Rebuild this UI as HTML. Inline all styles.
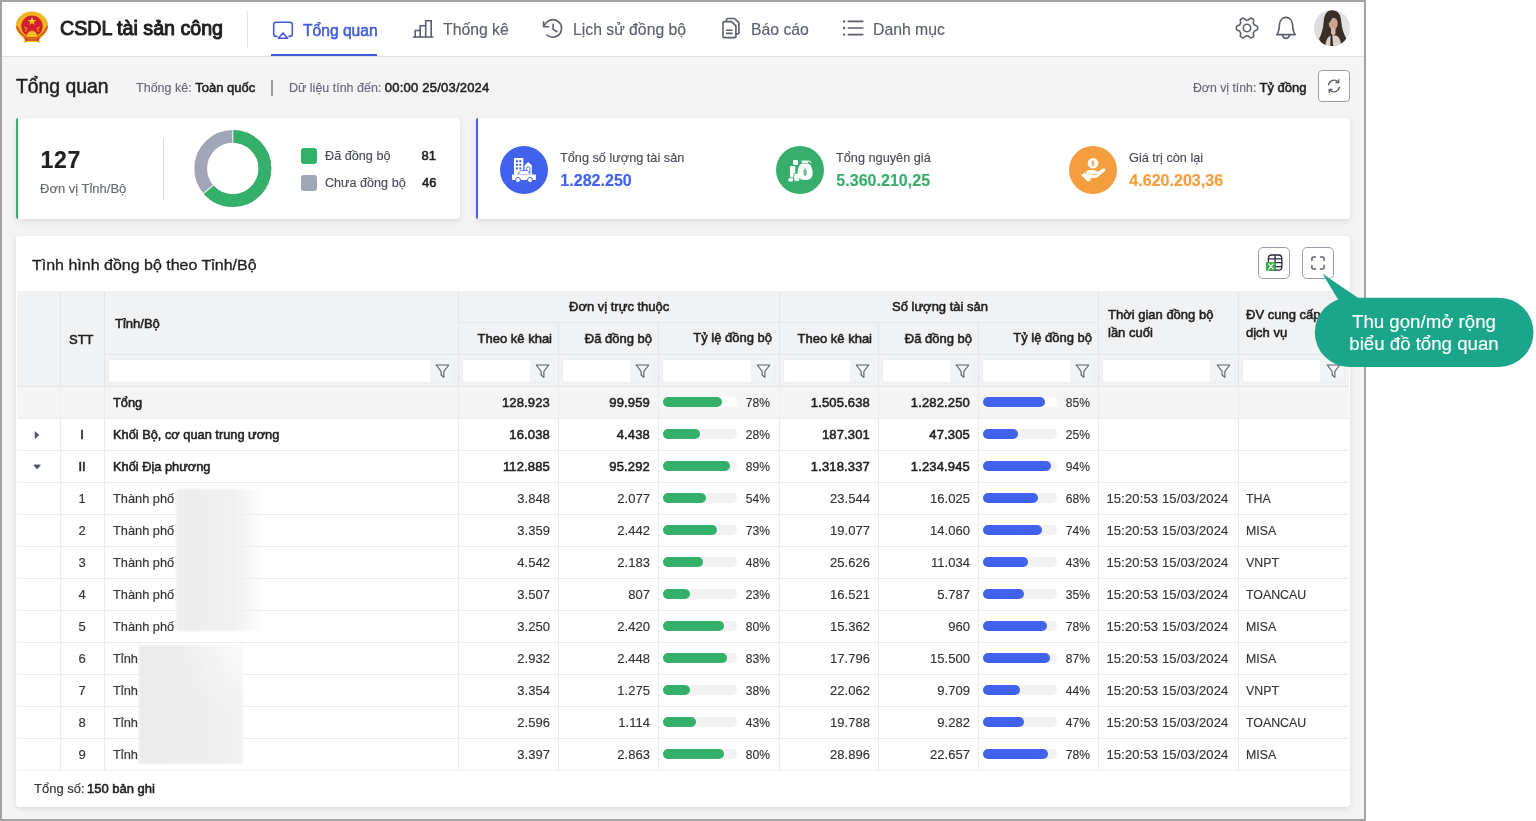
<!DOCTYPE html>
<html lang="vi">
<head>
<meta charset="utf-8">
<title>CSDL tài sản công</title>
<style>
*{box-sizing:border-box;margin:0;padding:0}
html,body{width:1536px;height:821px;background:#fff;overflow:hidden}
body{font-family:"Liberation Sans",sans-serif;color:#1f1f1f;font-size:13px;position:relative}
.abs{position:absolute}
.t{position:absolute;white-space:nowrap;line-height:1;-webkit-text-stroke:.15px currentColor}
#win{position:absolute;left:0;top:0;width:1366px;height:821px;border:2px solid #a3a3a3;background:#f4f4f5;overflow:hidden}
/* everything inside #inner is positioned in page coordinates */
#inner{position:absolute;left:-2px;top:-2px;width:1366px;height:821px;will-change:transform}
#hdr{position:absolute;left:2px;top:2px;width:1362px;height:55px;background:#fff;border-bottom:1px solid #e0e0e3}
.nav{color:#5b5f6e;font-size:16px}
.nav.act{color:#405cdc;-webkit-text-stroke:.55px #405cdc}
.g{color:#666a77}
.b{font-weight:normal;-webkit-text-stroke:.55px currentColor}
.bb{font-weight:normal;-webkit-text-stroke:1px currentColor}
.card{position:absolute;background:#fff;border-radius:4px;box-shadow:0 2px 6px rgba(0,0,0,.10)}
</style>
</head>
<body>
<div id="win"><div id="inner">

<!-- ===== HEADER ===== -->
<div id="hdr"></div>
<div id="logo" class="abs" style="left:16px;top:12px;width:32px;height:32px"></div>
<div class="t bb" id="apptitle" style="transform:scaleX(.982);transform-origin:left;left:60px;top:18px;font-size:20px;color:#1f1f1f">CSDL tài sản công</div>
<div class="abs" style="left:247px;top:11px;width:1px;height:36px;background:#e3e3e6"></div>

<div class="t nav act" id="n1" style="left:303px;top:23px;transform:scaleX(.975);transform-origin:left">Tổng quan</div>
<div class="abs" style="left:271.300px;top:53.800px;width:106.200px;height:2.200px;background:#405cdc"></div>
<div class="t nav" id="n2" style="transform:scaleX(.985);transform-origin:left;left:443px;top:22px">Thống kê</div>
<div class="t nav" id="n3" style="transform:scaleX(.985);transform-origin:left;left:573px;top:22px">Lịch sử đồng bộ</div>
<div class="t nav" id="n4" style="transform:scaleX(.985);transform-origin:left;left:751px;top:22px">Báo cáo</div>
<div class="t nav" id="n5" style="transform:scaleX(.985);transform-origin:left;left:873px;top:22px">Danh mục</div>


<!-- header icons (page coords) -->
<svg class="abs" style="left:0;top:0" width="1366" height="58" viewBox="0 0 1366 58" fill="none" stroke-linecap="round" stroke-linejoin="round">
  <!-- emblem -->
  <g id="emblem" stroke="none">
    <path d="M32 11.900C41 11.900 46.500 17.500 47.600 24.300C48.200 27.500 47 31.200 44 34.600C42.200 36.800 40.200 38.400 38.600 39.400L40.900 43.600L36.500 42.100H27.500L23.100 43.600L25.400 39.400C23.800 38.400 21.800 36.800 20 34.600C17 31.200 15.800 27.500 16.400 24.300C17.500 17.500 23 11.900 32 11.900Z" fill="#f2b51c"/>
    <path d="M32 11.900C41 11.900 46.500 17.500 47.600 24.300C48.200 27.500 47 31.200 44 34.600C42.200 36.800 40.200 38.400 38.600 39.400H25.400C23.800 38.400 21.800 36.800 20 34.600C17 31.200 15.800 27.500 16.400 24.300C17.500 17.500 23 11.900 32 11.900Z" fill="none" stroke="#e9a215" stroke-width=".7"/>
    <circle cx="32" cy="26.200" r="10.700" fill="#d11f2f"/>
    <path d="M16.900 26.800C18.500 31 21.500 34.600 25.600 36.700M47.100 26.800C45.500 31 42.500 34.600 38.400 36.700" stroke="#cc521b" stroke-width="1.700" fill="none" stroke-linecap="round"/>
    <path d="M21.700 30.500C22.800 33.500 24.500 35.800 26.500 37.300H37.500C39.500 35.800 41.200 33.500 42.300 30.500C40.500 34.500 36.500 36.500 32 36.500S23.500 34.500 21.700 30.500Z" fill="#f2b51c"/>
    <path d="M32 16.800l1.150 3.100h3.250l-2.600 2 .95 3.150L32 23.150l-2.750 1.900.95-3.150-2.600-2h3.250Z" fill="#f7c626"/>
    <path d="M24.400 27.300l2.400 1.100-1.300 3M39.600 27.300l-2.400 1.100 1.300 3" stroke="#f0901c" stroke-width="1.200" fill="none" stroke-linecap="round" stroke-linejoin="round"/>
    <path d="M26.300 37.500C26.300 33.600 28.800 30.900 32 30.900S37.700 33.600 37.700 37.500Z" fill="#f5bd22" stroke="#e0791a" stroke-width=".9"/>
    <path d="M24.300 37.300H39.700L38.900 41.100H25.100Z" fill="#d6451c"/>
    <path d="M27 38.600h10M27.600 40h8.800" stroke="#ef8a2a" stroke-width=".6" fill="none"/>
  </g>
  <!-- nav 1: overview (active) -->
  <g stroke="#405cdc" stroke-width="1.600">
    <path d="M277 36.400h-.8a2.500 2.500 0 0 1-2.500-2.500V24.700a2.500 2.500 0 0 1 2.500-2.500h13.600a2.500 2.500 0 0 1 2.500 2.500v9.200a2.500 2.500 0 0 1-2.500 2.500H289"/>
    <path d="M283 32.900l4.600 5.400h-9.200Z"/>
  </g>
  <!-- nav 2: bars -->
  <g stroke="#5b5f6e" stroke-width="1.600" stroke-linejoin="miter">
    <path d="M413.500 37h19.300"/>
    <path d="M415.200 37v-6.500h5V37M420.200 30.500v-4.800h5.500V37M425.700 25.700v-5h5.500V37"/>
  </g>
  <!-- nav 3: history -->
  <g stroke="#5b5f6e" stroke-width="1.600">
    <path d="M544.600 25.300A8.800 8.800 0 1 1 546.900 35"/>
    <path d="M543.600 21.800v5h5"/>
    <path d="M553.100 24.400v5l4 2.300"/>
  </g>
  <!-- nav 4: report -->
  <g stroke="#5b5f6e" stroke-width="1.600">
    <path d="M726.500 21v-1.300a1.200 1.200 0 0 1 1.200-1.200h6.800l4.400 4.200v10a1.200 1.200 0 0 1-1.200 1.200h-1.500"/>
    <path d="M724.200 21.600h7.200l4.500 4.300v10.500a1.200 1.200 0 0 1-1.200 1.200h-10.500a1.200 1.200 0 0 1-1.200-1.200V22.800a1.200 1.200 0 0 1 1.200-1.200Z"/>
    <path d="M726.600 30.200h5.300M726.600 33.400h5.300"/>
  </g>
  <!-- nav 5: list -->
  <g stroke="#5b5f6e" stroke-width="1.600">
    <path d="M848.300 21.400h14.500M848.300 28h14.500M848.300 34.600h14.500"/>
    <path d="M844.100 21.400h.01M844.100 28h.01M844.100 34.600h.01" stroke-width="2.400"/>
  </g>
  <!-- gear -->
  <g stroke="#5b5f6e" stroke-width="1.600">
    <path d="M1257.65 28.00 L1257.64 28.46 L1257.61 28.93 L1257.56 29.39 L1257.22 29.80 L1256.63 30.13 L1255.98 30.41 L1255.34 30.63 L1254.72 30.81 L1254.34 31.04 L1254.21 31.36 L1254.05 31.67 L1253.88 31.98 L1253.70 32.27 L1253.51 32.56 L1253.31 32.84 L1253.30 33.28 L1253.44 33.91 L1253.58 34.58 L1253.66 35.27 L1253.67 35.95 L1253.48 36.45 L1253.11 36.72 L1252.72 36.98 L1252.33 37.22 L1251.92 37.45 L1251.50 37.65 L1251.08 37.84 L1250.55 37.75 L1249.96 37.40 L1249.41 36.98 L1248.89 36.53 L1248.43 36.10 L1248.04 35.88 L1247.69 35.92 L1247.35 35.94 L1247.00 35.95 L1246.65 35.94 L1246.31 35.92 L1245.96 35.88 L1245.57 36.10 L1245.11 36.53 L1244.59 36.98 L1244.04 37.40 L1243.45 37.75 L1242.92 37.84 L1242.50 37.65 L1242.08 37.45 L1241.67 37.22 L1241.28 36.98 L1240.89 36.72 L1240.52 36.45 L1240.33 35.95 L1240.34 35.27 L1240.42 34.58 L1240.56 33.91 L1240.70 33.28 L1240.69 32.84 L1240.49 32.56 L1240.30 32.27 L1240.12 31.98 L1239.95 31.67 L1239.79 31.36 L1239.66 31.04 L1239.28 30.81 L1238.66 30.63 L1238.02 30.41 L1237.37 30.13 L1236.78 29.80 L1236.44 29.39 L1236.39 28.93 L1236.36 28.46 L1236.35 28.00 L1236.36 27.54 L1236.39 27.07 L1236.44 26.61 L1236.78 26.20 L1237.37 25.87 L1238.02 25.59 L1238.66 25.37 L1239.28 25.19 L1239.66 24.96 L1239.79 24.64 L1239.95 24.33 L1240.12 24.02 L1240.30 23.73 L1240.49 23.44 L1240.69 23.16 L1240.70 22.72 L1240.56 22.09 L1240.42 21.42 L1240.34 20.73 L1240.33 20.05 L1240.52 19.55 L1240.89 19.28 L1241.28 19.02 L1241.67 18.78 L1242.08 18.55 L1242.50 18.35 L1242.92 18.16 L1243.45 18.25 L1244.04 18.60 L1244.59 19.02 L1245.11 19.47 L1245.57 19.90 L1245.96 20.12 L1246.31 20.08 L1246.65 20.06 L1247.00 20.05 L1247.35 20.06 L1247.69 20.08 L1248.04 20.12 L1248.43 19.90 L1248.89 19.47 L1249.41 19.02 L1249.96 18.60 L1250.55 18.25 L1251.08 18.16 L1251.50 18.35 L1251.92 18.55 L1252.33 18.78 L1252.72 19.02 L1253.11 19.28 L1253.48 19.55 L1253.67 20.05 L1253.66 20.73 L1253.58 21.42 L1253.44 22.09 L1253.30 22.72 L1253.31 23.16 L1253.51 23.44 L1253.70 23.73 L1253.88 24.03 L1254.05 24.33 L1254.21 24.64 L1254.34 24.96 L1254.72 25.19 L1255.34 25.37 L1255.98 25.59 L1256.63 25.87 L1257.22 26.20 L1257.56 26.61 L1257.61 27.07 L1257.64 27.54Z"/>
    <circle cx="1247" cy="28" r="3.700"/>
  </g>
  <!-- bell -->
  <g stroke="#5b5f6e" stroke-width="1.600">
    <path d="M1276.800 34.600c1.400-1.600 2-3.600 2.300-6.200l.4-4.200c.4-4 3-6.800 6.500-6.800s6.100 2.800 6.500 6.800l.4 4.200c.3 2.600.9 4.600 2.300 6.200Z"/>
    <path d="M1282.600 35c.4 2.100 1.700 3.400 3.400 3.400s3-1.300 3.400-3.400"/>
  </g>
  <!-- avatar -->
  <defs><clipPath id="avc"><circle cx="1332" cy="28" r="18"/></clipPath><filter id="avb" x="-10%" y="-10%" width="120%" height="120%"><feGaussianBlur stdDeviation=".45"/></filter></defs>
  <g clip-path="url(#avc)" stroke="none">
    <rect x="1314" y="10" width="36" height="36" fill="#e2e3e6"/>
    <rect x="1314" y="10" width="10" height="36" fill="#dcdde1"/>
    <g filter="url(#avb)">
    <path d="M1332 10.200C1326.500 10.200 1324.300 15 1323.800 21C1323.200 29 1321.200 35 1319 39L1321.500 43.500L1327 46.500H1338L1343.500 43L1346.200 38.500C1343.200 33 1341.700 27 1341.200 21C1340.700 14.500 1338 10.200 1332 10.200Z" fill="#3a2d27"/>
    <path d="M1325.500 46.500C1325.500 40 1328 36.500 1331 35.500L1336 35.500C1339 36.500 1341 40 1341 46.500Z" fill="#d9cfc9"/>
    <ellipse cx="1333.200" cy="23.600" rx="4.500" ry="6" fill="#cda391"/>
    <path d="M1331 28h4.500v5.500l-2 2.500-2.500-2.500Z" fill="#d6b5a4"/>
    <path d="M1328.400 23.500C1328 18 1330.300 15.300 1333.600 15.300C1336.600 15.300 1338.100 17.300 1338.300 20C1336.400 18.300 1334.200 17.500 1332.300 17.700C1331.500 19.600 1330.200 21.800 1328.400 23.500Z" fill="#3a2d27"/>
    <path d="M1330.600 34.500l1.700 1 .8 11h-2.800Z" fill="#2b2522"/>
    </g>
  </g>
</svg>

<!-- ===== SUB HEADER ===== -->
<div class="t" id="pgtitle" style="-webkit-text-stroke:.45px currentColor;transform:scaleX(.968);transform-origin:left;left:16px;top:76px;font-size:20px;color:#1f1f1f">Tổng quan</div>
<div class="t g" id="s1" style="transform:scaleX(.965);transform-origin:left;left:135.500px;top:81px;font-size:13px">Thống kê:</div>
<div class="t b" id="s2" style="left:195.300px;top:81px;font-size:13px">Toàn quốc</div>
<div class="abs" style="left:271.300px;top:80px;width:1.400px;height:16px;background:#999ba3"></div>
<div class="t g" id="s3" style="transform:scaleX(.96);transform-origin:left;left:288.500px;top:81px;font-size:13px">Dữ liệu tính đến:</div>
<div class="t b" id="s4" style="letter-spacing:.22px;left:384.800px;top:81px;font-size:13px">00:00 25/03/2024</div>
<div class="t g" id="s5" style="transform:scaleX(.945);transform-origin:left;left:1192.500px;top:81px;font-size:13px">Đơn vị tính:</div>
<div class="t b" id="s6" style="left:1259.500px;top:81px;font-size:13px">Tỷ đồng</div>
<div class="abs" id="btnref" style="left:1318px;top:70px;width:32px;height:32px;border:1px solid #9a9eab;border-radius:4px;background:#fff"></div>


<!-- ===== CARDS ===== -->
<div class="card" id="card1" style="left:16px;top:118px;width:444px;height:100.500px;border-left:2px solid #35b06b;border-radius:2px 4px 4px 2px"></div>
<div class="card" id="card2" style="left:476px;top:118px;width:874px;height:100.500px;border-left:2px solid #4262ee;border-radius:2px 4px 4px 2px"></div>
<div class="t " id="c127" style="top:149.3px;font-size:23px;color:#1f1f1f;left:40.5px;letter-spacing:0.7px;font-weight:bold;">127</div>
<div class="t " id="cdv" style="top:182px;font-size:13px;color:#666a77;left:40px;">Đơn vị Tỉnh/Bộ</div>
<div class="abs" style="left:163px;top:138px;width:1px;height:62px;background:#d9dade"></div>
<svg class="abs" style="left:186px;top:122px" width="94" height="94" viewBox="186 122 94 94"><circle cx="232.8" cy="168.5" r="32.1" fill="none" stroke="#a0a6b8" stroke-width="12.8"/><circle cx="232.8" cy="168.5" r="32.1" fill="none" stroke="#35b06b" stroke-width="12.8" stroke-dasharray="128.64 201.69" transform="rotate(-90 232.8 168.5)"/><g stroke="#fff" stroke-width="1"><line x1="232.8" y1="129.5" x2="232.8" y2="143.3"/><line x1="232.8" y1="129.5" x2="232.8" y2="143.3" transform="rotate(229.61 232.8 168.5)"/></g></svg>
<div class="abs" style="left:301px;top:148px;width:16px;height:16px;border-radius:3px;background:#35b06b"></div>
<div class="abs" style="left:301px;top:175px;width:16px;height:16px;border-radius:3px;background:#a0a6b8"></div>
<div class="t " id="lg1" style="top:149px;font-size:13px;color:#4a4d5a;left:325px;transform:scaleX(0.975);transform-origin:left center;">Đã đồng bộ</div>
<div class="t " id="lg2" style="top:176px;font-size:13px;color:#4a4d5a;left:325px;transform:scaleX(0.97);transform-origin:left center;">Chưa đồng bộ</div>
<div class="t " id="lg1v" style="top:149px;font-size:13px;color:#1f1f1f;right:930px;-webkit-text-stroke:.55px currentColor;">81</div>
<div class="t " id="lg2v" style="top:176px;font-size:13px;color:#1f1f1f;right:929.5px;-webkit-text-stroke:.55px currentColor;">46</div>
<div class="abs" style="left:500px;top:146px;width:48px;height:48px;border-radius:50%;background:#4262ee"></div>
<div class="t " id="st1l" style="top:151px;font-size:13px;color:#4a4d5a;left:560px;transform:scaleX(0.978);transform-origin:left center;">Tổng số lượng tài sản</div>
<div class="t " id="st1v" style="top:172.7px;font-size:16px;color:#4262ee;left:560.3px;letter-spacing:0.03px;font-weight:bold;">1.282.250</div>
<div class="abs" style="left:776px;top:146px;width:48px;height:48px;border-radius:50%;background:#37ae6c"></div>
<div class="t " id="st2l" style="top:151px;font-size:13px;color:#4a4d5a;left:836px;transform:scaleX(0.978);transform-origin:left center;">Tổng nguyên giá</div>
<div class="t " id="st2v" style="top:172.7px;font-size:16px;color:#37ae6c;left:836.3px;letter-spacing:0.03px;font-weight:bold;">5.360.210,25</div>
<div class="abs" style="left:1069px;top:146px;width:48px;height:48px;border-radius:50%;background:#f59e3f"></div>
<div class="t " id="st3l" style="top:151px;font-size:13px;color:#4a4d5a;left:1129px;transform:scaleX(0.978);transform-origin:left center;">Giá trị còn lại</div>
<div class="t " id="st3v" style="top:172.7px;font-size:16px;color:#f59e3f;left:1129.3px;letter-spacing:0.03px;font-weight:bold;">4.620.203,36</div>
<svg class="abs" style="left:476px;top:140px" width="874" height="60" viewBox="476 140 874 60" fill="none"><g><rect x="514" y="158" width="9.300" height="17" fill="#fff"/><g fill="#4262f0"><rect x="516" y="160.200" width="2" height="2"/><rect x="519.300" y="160.200" width="2" height="2"/><rect x="516" y="163.800" width="2" height="2"/><rect x="519.300" y="163.800" width="2" height="2"/><rect x="516" y="167.400" width="2" height="2"/><rect x="519.300" y="167.400" width="2" height="2"/></g><path d="M524.600 175v-9.800l3.600-3.200 3.600 3.200V175Z" fill="#fff"/><path d="M526.500 173v-4.500a1.700 1.700 0 0 1 3.400 0V173" stroke="#4262f0" stroke-width=".9"/><path d="M517.500 174.800l2.300-3.300c.4-.6 1-.9 1.700-.9h5.300c.8 0 1.500.4 1.900 1.100l1.700 3.100Z" fill="#fff" stroke="#4262f0" stroke-width=".9"/><rect x="512" y="174.600" width="24" height="5.400" rx=".8" fill="#fff"/><circle cx="518" cy="180" r="2.500" fill="#fff" stroke="#4262f0" stroke-width="1"/><circle cx="530" cy="180" r="2.500" fill="#fff" stroke="#4262f0" stroke-width="1"/></g><g fill="#fff"><rect x="793" y="160" width="5" height="5" rx="1"/><rect x="790" y="166" width="5.300" height="11.500" rx="1"/><rect x="788.400" y="178.200" width="4.600" height="3.300" rx=".8"/><rect x="793.800" y="173.400" width="5.800" height="7.800" rx="1" stroke="#37ae6c" stroke-width=".8"/><path d="M801.500 163.500c-2.600 2-4 5.600-4 9.400 0 4.600 2.400 7 7.600 7s7.600-2.400 7.600-7c0-3.800-1.400-7.400-4-9.400Z"/><path d="M801 160.300l1.400 2.600h5.400l1.400-2.600-1.700.8-1-1.100-1.400 1.100-1.400-1.100-1 1.100Z"/><path d="M808.500 161.500c1.600-.6 2.800.4 2.400 1.800" stroke="#fff" stroke-width="1" fill="none"/></g><path d="M806.60 171.00C806.40 169.80 803.50 169.60 803.50 171.10C803.50 172.50 806.80 171.90 806.80 173.40C806.80 174.80 803.60 174.80 803.40 173.50M805.10 168.80V175.60" stroke="#37ae6c" stroke-width="1.0" fill="none" stroke-linecap="round"/><g fill="#fff"><circle cx="1093" cy="163.200" r="5.300"/><path d="M1081.200 175.200l3.600-2.600 6.400 6.800-3.200 2.300Z"/><path d="M1085.900 171.600c1.600-1.200 3.400-1.700 5.200-1.500l4.600.5c1 .1 1.700.7 1.800 1.500l5.200-3.500c.8-.5 1.800-.3 2.300.4.500.7.300 1.600-.4 2.200l-6.300 5.400c-1 .9-2.300 1.300-3.600 1.300h-3.400c-.8 0-1.500.3-2.100.8l-.6.500Z"/></g><path d="M1092.500 174.600h4.200" stroke="#f59e3f" stroke-width=".9" stroke-linecap="round"/><path d="M1094.28 162.28C1094.11 161.26 1091.64 161.09 1091.64 162.37C1091.64 163.56 1094.44 163.05 1094.44 164.32C1094.44 165.51 1091.72 165.51 1091.56 164.41M1093.00 160.41V166.19" stroke="#f59e3f" stroke-width="0.9" fill="none" stroke-linecap="round"/></svg>
<!-- ===== TABLE PANEL ===== -->
<div class="card" id="panel" style="left:16px;top:236px;width:1334px;height:571px"></div>
<div class="t " id="ptitle" style="top:256.6px;font-size:15px;color:#1f1f1f;left:32px;transform:scaleX(1.066);transform-origin:left center;-webkit-text-stroke:.3px currentColor;">Tình hình đồng bộ theo Tỉnh/Bộ</div>
<div class="abs" style="left:1258px;top:247px;width:32px;height:32px;border:1px solid #9a9eab;border-radius:5px;background:#fff"></div>
<div class="abs" style="left:1302px;top:247px;width:32px;height:32px;border:1px solid #9a9eab;border-radius:5px;background:#fff"></div>
<svg class="abs" style="left:1250px;top:60px" width="100" height="230" viewBox="1250 60 100 230" fill="none" stroke-linecap="round" stroke-linejoin="round"><g stroke="#5b5f6e" stroke-width="1.300"><path d="M1328.600 84.800a5.600 5.600 0 0 1 9.800-2.600"/><path d="M1338.800 79.600v2.900h-2.900"/><path d="M1339.400 87.200a5.600 5.600 0 0 1-9.800 2.600"/><path d="M1329.200 92.400v-2.900h2.900"/></g><g stroke="#2b2e3a" stroke-width="1.300"><rect x="1268.400" y="255" width="13.400" height="15.200" rx="3.200"/><path d="M1268.400 258.800h13.400M1275 262.700h6.800M1275 266.600h6.800M1275.100 255v15.200"/></g><rect x="1266" y="262" width="9.700" height="8.700" fill="#3fae4a"/><path d="M1268.800 263.900l4.200 5M1273 263.900l-4.200 5" stroke="#fff" stroke-width="1.300"/><g stroke="#5b5f6e" stroke-width="1.500"><path d="M1311.900 260.600v-2a1.600 1.600 0 0 1 1.600-1.600h2"/><path d="M1320.500 257h2a1.600 1.600 0 0 1 1.600 1.600v2"/><path d="M1324.100 265.400v2a1.600 1.600 0 0 1-1.600 1.600h-2"/><path d="M1315.500 269h-2a1.600 1.600 0 0 1-1.600-1.600v-2"/></g></svg>
<div class="abs" style="left:17px;top:291px;width:1332px;height:95px;background:#f1f2f4"></div>
<div class="abs" style="left:17px;top:386px;width:1332px;height:32px;background:#f5f5f5"></div>
<div class="abs" style="left:458px;top:322px;width:640px;height:1px;background:#e4e5e8"></div>
<div class="abs" style="left:104px;top:354px;width:1245px;height:1px;background:#e4e5e8"></div>
<div class="abs" style="left:17px;top:386px;width:1332px;height:1px;background:#e4e5e8"></div>
<div class="abs" style="left:17px;top:418px;width:1332px;height:1px;background:#ececee"></div>
<div class="abs" style="left:17px;top:450px;width:1332px;height:1px;background:#ececee"></div>
<div class="abs" style="left:17px;top:482px;width:1332px;height:1px;background:#ececee"></div>
<div class="abs" style="left:17px;top:514px;width:1332px;height:1px;background:#ececee"></div>
<div class="abs" style="left:17px;top:546px;width:1332px;height:1px;background:#ececee"></div>
<div class="abs" style="left:17px;top:578px;width:1332px;height:1px;background:#ececee"></div>
<div class="abs" style="left:17px;top:610px;width:1332px;height:1px;background:#ececee"></div>
<div class="abs" style="left:17px;top:642px;width:1332px;height:1px;background:#ececee"></div>
<div class="abs" style="left:17px;top:674px;width:1332px;height:1px;background:#ececee"></div>
<div class="abs" style="left:17px;top:706px;width:1332px;height:1px;background:#ececee"></div>
<div class="abs" style="left:17px;top:738px;width:1332px;height:1px;background:#ececee"></div>
<div class="abs" style="left:17px;top:770px;width:1332px;height:1px;background:#f0f0f1"></div>
<div class="abs" style="left:60px;top:291px;width:1px;height:95px;background:#e4e5e8"></div>
<div class="abs" style="left:60px;top:386px;width:1px;height:384px;background:#ececee"></div>
<div class="abs" style="left:104px;top:291px;width:1px;height:95px;background:#e4e5e8"></div>
<div class="abs" style="left:104px;top:386px;width:1px;height:384px;background:#ececee"></div>
<div class="abs" style="left:458px;top:291px;width:1px;height:95px;background:#e4e5e8"></div>
<div class="abs" style="left:458px;top:386px;width:1px;height:384px;background:#ececee"></div>
<div class="abs" style="left:558px;top:322px;width:1px;height:64px;background:#e4e5e8"></div>
<div class="abs" style="left:558px;top:386px;width:1px;height:384px;background:#ececee"></div>
<div class="abs" style="left:658px;top:322px;width:1px;height:64px;background:#e4e5e8"></div>
<div class="abs" style="left:658px;top:386px;width:1px;height:384px;background:#ececee"></div>
<div class="abs" style="left:779px;top:291px;width:1px;height:95px;background:#e4e5e8"></div>
<div class="abs" style="left:779px;top:386px;width:1px;height:384px;background:#ececee"></div>
<div class="abs" style="left:878px;top:322px;width:1px;height:64px;background:#e4e5e8"></div>
<div class="abs" style="left:878px;top:386px;width:1px;height:384px;background:#ececee"></div>
<div class="abs" style="left:978px;top:322px;width:1px;height:64px;background:#e4e5e8"></div>
<div class="abs" style="left:978px;top:386px;width:1px;height:384px;background:#ececee"></div>
<div class="abs" style="left:1098px;top:291px;width:1px;height:95px;background:#e4e5e8"></div>
<div class="abs" style="left:1098px;top:386px;width:1px;height:384px;background:#ececee"></div>
<div class="abs" style="left:1238px;top:291px;width:1px;height:95px;background:#e4e5e8"></div>
<div class="abs" style="left:1238px;top:386px;width:1px;height:384px;background:#ececee"></div>
<div class="t " id="hstt" style="top:333px;font-size:13px;color:#1f1f1f;left:69px;-webkit-text-stroke:.55px currentColor;">STT</div>
<div class="t " id="htinh" style="top:317px;font-size:13px;color:#1f1f1f;left:115px;-webkit-text-stroke:.55px currentColor;">Tỉnh/Bộ</div>
<div class="t " id="hg1" style="top:300px;font-size:13px;color:#1f1f1f;left:569px;-webkit-text-stroke:.55px currentColor;">Đơn vị trực thuộc</div>
<div class="t " id="hg2" style="top:300px;font-size:13px;color:#1f1f1f;left:892px;-webkit-text-stroke:.55px currentColor;">Số lượng tài sản</div>
<div class="t " id="h1" style="top:332px;font-size:13px;color:#1f1f1f;right:814px;-webkit-text-stroke:.55px currentColor;">Theo kê khai</div>
<div class="t " id="h2" style="top:332px;font-size:13px;color:#1f1f1f;right:714px;-webkit-text-stroke:.55px currentColor;">Đã đồng bộ</div>
<div class="t " id="h3" style="top:331px;font-size:13px;color:#1f1f1f;right:594px;-webkit-text-stroke:.55px currentColor;">Tỷ lệ đồng bộ</div>
<div class="t " id="h4" style="top:332px;font-size:13px;color:#1f1f1f;right:494px;-webkit-text-stroke:.55px currentColor;">Theo kê khai</div>
<div class="t " id="h5" style="top:332px;font-size:13px;color:#1f1f1f;right:394px;-webkit-text-stroke:.55px currentColor;">Đã đồng bộ</div>
<div class="t " id="h6" style="top:331px;font-size:13px;color:#1f1f1f;right:274px;-webkit-text-stroke:.55px currentColor;">Tỷ lệ đồng bộ</div>
<div class="t " id="h7a" style="top:308px;font-size:13px;color:#1f1f1f;left:1108px;-webkit-text-stroke:.55px currentColor;">Thời gian đồng bộ</div>
<div class="t " id="h7b" style="top:326px;font-size:13px;color:#1f1f1f;left:1108px;-webkit-text-stroke:.55px currentColor;">lần cuối</div>
<div class="t " id="h8a" style="top:308px;font-size:13px;color:#1f1f1f;left:1246px;-webkit-text-stroke:.55px currentColor;">ĐV cung cấp</div>
<div class="t " id="h8b" style="top:326px;font-size:13px;color:#1f1f1f;left:1246px;-webkit-text-stroke:.55px currentColor;">dịch vụ</div>
<div class="abs" style="left:108.7px;top:359.700px;width:344.5px;height:22.500px;background:#fff;border-radius:2px;box-shadow:0 0 0 .5px #e9eaec"><div style="position:absolute;right:0;top:0;width:23.500px;height:22.500px;background:#f3f4f6;border-radius:0 2px 2px 0"></div><svg width="15" height="14.500" viewBox="0 0 15 14.500" style="position:absolute;right:3px;top:4.200px" fill="none" stroke="#5a5e6a" stroke-width="1.100" stroke-linejoin="round"><path d="M1.200 1h12.600l-4.900 6.300v6l-2.800-2.300V7.300Z"/></svg></div>
<div class="abs" style="left:462.5px;top:359.700px;width:90.70000000000005px;height:22.500px;background:#fff;border-radius:2px;box-shadow:0 0 0 .5px #e9eaec"><div style="position:absolute;right:0;top:0;width:23.500px;height:22.500px;background:#f3f4f6;border-radius:0 2px 2px 0"></div><svg width="15" height="14.500" viewBox="0 0 15 14.500" style="position:absolute;right:3px;top:4.200px" fill="none" stroke="#5a5e6a" stroke-width="1.100" stroke-linejoin="round"><path d="M1.200 1h12.600l-4.900 6.300v6l-2.800-2.300V7.300Z"/></svg></div>
<div class="abs" style="left:562.5px;top:359.700px;width:90.70000000000005px;height:22.500px;background:#fff;border-radius:2px;box-shadow:0 0 0 .5px #e9eaec"><div style="position:absolute;right:0;top:0;width:23.500px;height:22.500px;background:#f3f4f6;border-radius:0 2px 2px 0"></div><svg width="15" height="14.500" viewBox="0 0 15 14.500" style="position:absolute;right:3px;top:4.200px" fill="none" stroke="#5a5e6a" stroke-width="1.100" stroke-linejoin="round"><path d="M1.200 1h12.600l-4.900 6.300v6l-2.800-2.300V7.300Z"/></svg></div>
<div class="abs" style="left:662.5px;top:359.700px;width:111.70000000000005px;height:22.500px;background:#fff;border-radius:2px;box-shadow:0 0 0 .5px #e9eaec"><div style="position:absolute;right:0;top:0;width:23.500px;height:22.500px;background:#f3f4f6;border-radius:0 2px 2px 0"></div><svg width="15" height="14.500" viewBox="0 0 15 14.500" style="position:absolute;right:3px;top:4.200px" fill="none" stroke="#5a5e6a" stroke-width="1.100" stroke-linejoin="round"><path d="M1.200 1h12.600l-4.900 6.300v6l-2.800-2.300V7.300Z"/></svg></div>
<div class="abs" style="left:783.5px;top:359.700px;width:89.70000000000005px;height:22.500px;background:#fff;border-radius:2px;box-shadow:0 0 0 .5px #e9eaec"><div style="position:absolute;right:0;top:0;width:23.500px;height:22.500px;background:#f3f4f6;border-radius:0 2px 2px 0"></div><svg width="15" height="14.500" viewBox="0 0 15 14.500" style="position:absolute;right:3px;top:4.200px" fill="none" stroke="#5a5e6a" stroke-width="1.100" stroke-linejoin="round"><path d="M1.200 1h12.600l-4.900 6.300v6l-2.800-2.300V7.300Z"/></svg></div>
<div class="abs" style="left:882.5px;top:359.700px;width:90.70000000000005px;height:22.500px;background:#fff;border-radius:2px;box-shadow:0 0 0 .5px #e9eaec"><div style="position:absolute;right:0;top:0;width:23.500px;height:22.500px;background:#f3f4f6;border-radius:0 2px 2px 0"></div><svg width="15" height="14.500" viewBox="0 0 15 14.500" style="position:absolute;right:3px;top:4.200px" fill="none" stroke="#5a5e6a" stroke-width="1.100" stroke-linejoin="round"><path d="M1.200 1h12.600l-4.900 6.300v6l-2.800-2.300V7.300Z"/></svg></div>
<div class="abs" style="left:982.5px;top:359.700px;width:110.70000000000005px;height:22.500px;background:#fff;border-radius:2px;box-shadow:0 0 0 .5px #e9eaec"><div style="position:absolute;right:0;top:0;width:23.500px;height:22.500px;background:#f3f4f6;border-radius:0 2px 2px 0"></div><svg width="15" height="14.500" viewBox="0 0 15 14.500" style="position:absolute;right:3px;top:4.200px" fill="none" stroke="#5a5e6a" stroke-width="1.100" stroke-linejoin="round"><path d="M1.200 1h12.600l-4.900 6.300v6l-2.800-2.300V7.300Z"/></svg></div>
<div class="abs" style="left:1102.5px;top:359.700px;width:131.29999999999995px;height:22.500px;background:#fff;border-radius:2px;box-shadow:0 0 0 .5px #e9eaec"><div style="position:absolute;right:0;top:0;width:23.500px;height:22.500px;background:#f3f4f6;border-radius:0 2px 2px 0"></div><svg width="15" height="14.500" viewBox="0 0 15 14.500" style="position:absolute;right:3px;top:4.200px" fill="none" stroke="#5a5e6a" stroke-width="1.100" stroke-linejoin="round"><path d="M1.200 1h12.600l-4.900 6.300v6l-2.800-2.300V7.300Z"/></svg></div>
<div class="abs" style="left:1242.5px;top:359.700px;width:101.0px;height:22.500px;background:#fff;border-radius:2px;box-shadow:0 0 0 .5px #e9eaec"><div style="position:absolute;right:0;top:0;width:23.500px;height:22.500px;background:#f3f4f6;border-radius:0 2px 2px 0"></div><svg width="15" height="14.500" viewBox="0 0 15 14.500" style="position:absolute;right:3px;top:4.200px" fill="none" stroke="#5a5e6a" stroke-width="1.100" stroke-linejoin="round"><path d="M1.200 1h12.600l-4.900 6.300v6l-2.800-2.300V7.300Z"/></svg></div>
<div class="t rb" style="top:396px;font-size:13px;color:#1f1f1f;left:112.5px;-webkit-text-stroke:.55px currentColor;transform:scaleX(0.985);transform-origin:left center;">Tổng</div>
<div class="t rb" style="top:396px;font-size:13px;color:#1f1f1f;right:816px;-webkit-text-stroke:.55px currentColor;letter-spacing:0.15px;">128.923</div>
<div class="t rb" style="top:396px;font-size:13px;color:#1f1f1f;right:716px;-webkit-text-stroke:.55px currentColor;letter-spacing:0.15px;">99.959</div>
<div class="abs" style="left:663px;top:397px;width:74px;height:10px;border-radius:5px;background:#fff"></div>
<div class="abs" style="left:663px;top:397px;width:59px;height:10px;border-radius:5px;background:#35b06b"></div>
<div class="t rn" style="top:396px;font-size:13px;color:#333;right:596px;transform:scaleX(0.93);transform-origin:right center;">78%</div>
<div class="t rb" style="top:396px;font-size:13px;color:#1f1f1f;right:496px;-webkit-text-stroke:.55px currentColor;letter-spacing:0.15px;">1.505.638</div>
<div class="t rb" style="top:396px;font-size:13px;color:#1f1f1f;right:396px;-webkit-text-stroke:.55px currentColor;letter-spacing:0.15px;">1.282.250</div>
<div class="abs" style="left:983px;top:397px;width:74px;height:10px;border-radius:5px;background:#fff"></div>
<div class="abs" style="left:983px;top:397px;width:62px;height:10px;border-radius:5px;background:#4262ee"></div>
<div class="t rn" style="top:396px;font-size:13px;color:#333;right:276px;transform:scaleX(0.93);transform-origin:right center;">85%</div>
<div class="t rb" style="left:60px;width:44px;text-align:center;top:428px;font-size:13px;color:#1f1f1f;-webkit-text-stroke:.55px currentColor;">I</div>
<div class="t rb" style="top:428px;font-size:13px;color:#1f1f1f;left:112.5px;-webkit-text-stroke:.55px currentColor;transform:scaleX(0.985);transform-origin:left center;">Khối Bộ, cơ quan trung ương</div>
<div class="t rb" style="top:428px;font-size:13px;color:#1f1f1f;right:816px;-webkit-text-stroke:.55px currentColor;letter-spacing:0.15px;">16.038</div>
<div class="t rb" style="top:428px;font-size:13px;color:#1f1f1f;right:716px;-webkit-text-stroke:.55px currentColor;letter-spacing:0.15px;">4.438</div>
<div class="abs" style="left:663px;top:429px;width:74px;height:10px;border-radius:5px;background:#f2f2f3"></div>
<div class="abs" style="left:663px;top:429px;width:37px;height:10px;border-radius:5px;background:#35b06b"></div>
<div class="t rn" style="top:428px;font-size:13px;color:#333;right:596px;transform:scaleX(0.93);transform-origin:right center;">28%</div>
<div class="t rb" style="top:428px;font-size:13px;color:#1f1f1f;right:496px;-webkit-text-stroke:.55px currentColor;letter-spacing:0.15px;">187.301</div>
<div class="t rb" style="top:428px;font-size:13px;color:#1f1f1f;right:396px;-webkit-text-stroke:.55px currentColor;letter-spacing:0.15px;">47.305</div>
<div class="abs" style="left:983px;top:429px;width:74px;height:10px;border-radius:5px;background:#f2f2f3"></div>
<div class="abs" style="left:983px;top:429px;width:35px;height:10px;border-radius:5px;background:#4262ee"></div>
<div class="t rn" style="top:428px;font-size:13px;color:#333;right:276px;transform:scaleX(0.93);transform-origin:right center;">25%</div>
<div class="t rb" style="left:60px;width:44px;text-align:center;top:460px;font-size:13px;color:#1f1f1f;-webkit-text-stroke:.55px currentColor;">II</div>
<div class="t rb" style="top:460px;font-size:13px;color:#1f1f1f;left:112.5px;-webkit-text-stroke:.55px currentColor;transform:scaleX(0.985);transform-origin:left center;">Khối Địa phương</div>
<div class="t rb" style="top:460px;font-size:13px;color:#1f1f1f;right:816px;-webkit-text-stroke:.55px currentColor;letter-spacing:0.15px;">112.885</div>
<div class="t rb" style="top:460px;font-size:13px;color:#1f1f1f;right:716px;-webkit-text-stroke:.55px currentColor;letter-spacing:0.15px;">95.292</div>
<div class="abs" style="left:663px;top:461px;width:74px;height:10px;border-radius:5px;background:#f2f2f3"></div>
<div class="abs" style="left:663px;top:461px;width:67px;height:10px;border-radius:5px;background:#35b06b"></div>
<div class="t rn" style="top:460px;font-size:13px;color:#333;right:596px;transform:scaleX(0.93);transform-origin:right center;">89%</div>
<div class="t rb" style="top:460px;font-size:13px;color:#1f1f1f;right:496px;-webkit-text-stroke:.55px currentColor;letter-spacing:0.15px;">1.318.337</div>
<div class="t rb" style="top:460px;font-size:13px;color:#1f1f1f;right:396px;-webkit-text-stroke:.55px currentColor;letter-spacing:0.15px;">1.234.945</div>
<div class="abs" style="left:983px;top:461px;width:74px;height:10px;border-radius:5px;background:#f2f2f3"></div>
<div class="abs" style="left:983px;top:461px;width:68px;height:10px;border-radius:5px;background:#4262ee"></div>
<div class="t rn" style="top:460px;font-size:13px;color:#333;right:276px;transform:scaleX(0.93);transform-origin:right center;">94%</div>
<div class="t rn" style="left:60px;width:44px;text-align:center;top:492px;font-size:13px;color:#333;">1</div>
<div class="t rn" style="top:492px;font-size:13px;color:#333;left:112.5px;transform:scaleX(0.985);transform-origin:left center;">Thành phố</div>
<div class="t rn" style="top:492px;font-size:13px;color:#333;right:816px;letter-spacing:0.02px;">3.848</div>
<div class="t rn" style="top:492px;font-size:13px;color:#333;right:716px;letter-spacing:0.02px;">2.077</div>
<div class="abs" style="left:663px;top:493px;width:74px;height:10px;border-radius:5px;background:#f2f2f3"></div>
<div class="abs" style="left:663px;top:493px;width:43px;height:10px;border-radius:5px;background:#35b06b"></div>
<div class="t rn" style="top:492px;font-size:13px;color:#333;right:596px;transform:scaleX(0.93);transform-origin:right center;">54%</div>
<div class="t rn" style="top:492px;font-size:13px;color:#333;right:496px;letter-spacing:0.02px;">23.544</div>
<div class="t rn" style="top:492px;font-size:13px;color:#333;right:396px;letter-spacing:0.02px;">16.025</div>
<div class="abs" style="left:983px;top:493px;width:74px;height:10px;border-radius:5px;background:#f2f2f3"></div>
<div class="abs" style="left:983px;top:493px;width:55px;height:10px;border-radius:5px;background:#4262ee"></div>
<div class="t rn" style="top:492px;font-size:13px;color:#333;right:276px;transform:scaleX(0.93);transform-origin:right center;">68%</div>
<div class="t rn" style="top:492px;font-size:13px;color:#333;left:1106.5px;letter-spacing:0.14px;">15:20:53 15/03/2024</div>
<div class="t rn" style="top:492px;font-size:13px;color:#333;left:1246.3px;transform:scaleX(0.95);transform-origin:left center;">THA</div>
<div class="t rn" style="left:60px;width:44px;text-align:center;top:524px;font-size:13px;color:#333;">2</div>
<div class="t rn" style="top:524px;font-size:13px;color:#333;left:112.5px;transform:scaleX(0.985);transform-origin:left center;">Thành phố</div>
<div class="t rn" style="top:524px;font-size:13px;color:#333;right:816px;letter-spacing:0.02px;">3.359</div>
<div class="t rn" style="top:524px;font-size:13px;color:#333;right:716px;letter-spacing:0.02px;">2.442</div>
<div class="abs" style="left:663px;top:525px;width:74px;height:10px;border-radius:5px;background:#f2f2f3"></div>
<div class="abs" style="left:663px;top:525px;width:54px;height:10px;border-radius:5px;background:#35b06b"></div>
<div class="t rn" style="top:524px;font-size:13px;color:#333;right:596px;transform:scaleX(0.93);transform-origin:right center;">73%</div>
<div class="t rn" style="top:524px;font-size:13px;color:#333;right:496px;letter-spacing:0.02px;">19.077</div>
<div class="t rn" style="top:524px;font-size:13px;color:#333;right:396px;letter-spacing:0.02px;">14.060</div>
<div class="abs" style="left:983px;top:525px;width:74px;height:10px;border-radius:5px;background:#f2f2f3"></div>
<div class="abs" style="left:983px;top:525px;width:59px;height:10px;border-radius:5px;background:#4262ee"></div>
<div class="t rn" style="top:524px;font-size:13px;color:#333;right:276px;transform:scaleX(0.93);transform-origin:right center;">74%</div>
<div class="t rn" style="top:524px;font-size:13px;color:#333;left:1106.5px;letter-spacing:0.14px;">15:20:53 15/03/2024</div>
<div class="t rn" style="top:524px;font-size:13px;color:#333;left:1246.3px;transform:scaleX(0.95);transform-origin:left center;">MISA</div>
<div class="t rn" style="left:60px;width:44px;text-align:center;top:556px;font-size:13px;color:#333;">3</div>
<div class="t rn" style="top:556px;font-size:13px;color:#333;left:112.5px;transform:scaleX(0.985);transform-origin:left center;">Thành phố</div>
<div class="t rn" style="top:556px;font-size:13px;color:#333;right:816px;letter-spacing:0.02px;">4.542</div>
<div class="t rn" style="top:556px;font-size:13px;color:#333;right:716px;letter-spacing:0.02px;">2.183</div>
<div class="abs" style="left:663px;top:557px;width:74px;height:10px;border-radius:5px;background:#f2f2f3"></div>
<div class="abs" style="left:663px;top:557px;width:40px;height:10px;border-radius:5px;background:#35b06b"></div>
<div class="t rn" style="top:556px;font-size:13px;color:#333;right:596px;transform:scaleX(0.93);transform-origin:right center;">48%</div>
<div class="t rn" style="top:556px;font-size:13px;color:#333;right:496px;letter-spacing:0.02px;">25.626</div>
<div class="t rn" style="top:556px;font-size:13px;color:#333;right:396px;letter-spacing:0.02px;">11.034</div>
<div class="abs" style="left:983px;top:557px;width:74px;height:10px;border-radius:5px;background:#f2f2f3"></div>
<div class="abs" style="left:983px;top:557px;width:45px;height:10px;border-radius:5px;background:#4262ee"></div>
<div class="t rn" style="top:556px;font-size:13px;color:#333;right:276px;transform:scaleX(0.93);transform-origin:right center;">43%</div>
<div class="t rn" style="top:556px;font-size:13px;color:#333;left:1106.5px;letter-spacing:0.14px;">15:20:53 15/03/2024</div>
<div class="t rn" style="top:556px;font-size:13px;color:#333;left:1246.3px;transform:scaleX(0.95);transform-origin:left center;">VNPT</div>
<div class="t rn" style="left:60px;width:44px;text-align:center;top:588px;font-size:13px;color:#333;">4</div>
<div class="t rn" style="top:588px;font-size:13px;color:#333;left:112.5px;transform:scaleX(0.985);transform-origin:left center;">Thành phố</div>
<div class="t rn" style="top:588px;font-size:13px;color:#333;right:816px;letter-spacing:0.02px;">3.507</div>
<div class="t rn" style="top:588px;font-size:13px;color:#333;right:716px;letter-spacing:0.02px;">807</div>
<div class="abs" style="left:663px;top:589px;width:74px;height:10px;border-radius:5px;background:#f2f2f3"></div>
<div class="abs" style="left:663px;top:589px;width:27px;height:10px;border-radius:5px;background:#35b06b"></div>
<div class="t rn" style="top:588px;font-size:13px;color:#333;right:596px;transform:scaleX(0.93);transform-origin:right center;">23%</div>
<div class="t rn" style="top:588px;font-size:13px;color:#333;right:496px;letter-spacing:0.02px;">16.521</div>
<div class="t rn" style="top:588px;font-size:13px;color:#333;right:396px;letter-spacing:0.02px;">5.787</div>
<div class="abs" style="left:983px;top:589px;width:74px;height:10px;border-radius:5px;background:#f2f2f3"></div>
<div class="abs" style="left:983px;top:589px;width:41px;height:10px;border-radius:5px;background:#4262ee"></div>
<div class="t rn" style="top:588px;font-size:13px;color:#333;right:276px;transform:scaleX(0.93);transform-origin:right center;">35%</div>
<div class="t rn" style="top:588px;font-size:13px;color:#333;left:1106.5px;letter-spacing:0.14px;">15:20:53 15/03/2024</div>
<div class="t rn" style="top:588px;font-size:13px;color:#333;left:1246.3px;transform:scaleX(0.95);transform-origin:left center;">TOANCAU</div>
<div class="t rn" style="left:60px;width:44px;text-align:center;top:620px;font-size:13px;color:#333;">5</div>
<div class="t rn" style="top:620px;font-size:13px;color:#333;left:112.5px;transform:scaleX(0.985);transform-origin:left center;">Thành phố</div>
<div class="t rn" style="top:620px;font-size:13px;color:#333;right:816px;letter-spacing:0.02px;">3.250</div>
<div class="t rn" style="top:620px;font-size:13px;color:#333;right:716px;letter-spacing:0.02px;">2.420</div>
<div class="abs" style="left:663px;top:621px;width:74px;height:10px;border-radius:5px;background:#f2f2f3"></div>
<div class="abs" style="left:663px;top:621px;width:61px;height:10px;border-radius:5px;background:#35b06b"></div>
<div class="t rn" style="top:620px;font-size:13px;color:#333;right:596px;transform:scaleX(0.93);transform-origin:right center;">80%</div>
<div class="t rn" style="top:620px;font-size:13px;color:#333;right:496px;letter-spacing:0.02px;">15.362</div>
<div class="t rn" style="top:620px;font-size:13px;color:#333;right:396px;letter-spacing:0.02px;">960</div>
<div class="abs" style="left:983px;top:621px;width:74px;height:10px;border-radius:5px;background:#f2f2f3"></div>
<div class="abs" style="left:983px;top:621px;width:64px;height:10px;border-radius:5px;background:#4262ee"></div>
<div class="t rn" style="top:620px;font-size:13px;color:#333;right:276px;transform:scaleX(0.93);transform-origin:right center;">78%</div>
<div class="t rn" style="top:620px;font-size:13px;color:#333;left:1106.5px;letter-spacing:0.14px;">15:20:53 15/03/2024</div>
<div class="t rn" style="top:620px;font-size:13px;color:#333;left:1246.3px;transform:scaleX(0.95);transform-origin:left center;">MISA</div>
<div class="t rn" style="left:60px;width:44px;text-align:center;top:652px;font-size:13px;color:#333;">6</div>
<div class="t rn" style="top:652px;font-size:13px;color:#333;left:112.5px;transform:scaleX(0.985);transform-origin:left center;">Tỉnh</div>
<div class="t rn" style="top:652px;font-size:13px;color:#333;right:816px;letter-spacing:0.02px;">2.932</div>
<div class="t rn" style="top:652px;font-size:13px;color:#333;right:716px;letter-spacing:0.02px;">2.448</div>
<div class="abs" style="left:663px;top:653px;width:74px;height:10px;border-radius:5px;background:#f2f2f3"></div>
<div class="abs" style="left:663px;top:653px;width:64px;height:10px;border-radius:5px;background:#35b06b"></div>
<div class="t rn" style="top:652px;font-size:13px;color:#333;right:596px;transform:scaleX(0.93);transform-origin:right center;">83%</div>
<div class="t rn" style="top:652px;font-size:13px;color:#333;right:496px;letter-spacing:0.02px;">17.796</div>
<div class="t rn" style="top:652px;font-size:13px;color:#333;right:396px;letter-spacing:0.02px;">15.500</div>
<div class="abs" style="left:983px;top:653px;width:74px;height:10px;border-radius:5px;background:#f2f2f3"></div>
<div class="abs" style="left:983px;top:653px;width:67px;height:10px;border-radius:5px;background:#4262ee"></div>
<div class="t rn" style="top:652px;font-size:13px;color:#333;right:276px;transform:scaleX(0.93);transform-origin:right center;">87%</div>
<div class="t rn" style="top:652px;font-size:13px;color:#333;left:1106.5px;letter-spacing:0.14px;">15:20:53 15/03/2024</div>
<div class="t rn" style="top:652px;font-size:13px;color:#333;left:1246.3px;transform:scaleX(0.95);transform-origin:left center;">MISA</div>
<div class="t rn" style="left:60px;width:44px;text-align:center;top:684px;font-size:13px;color:#333;">7</div>
<div class="t rn" style="top:684px;font-size:13px;color:#333;left:112.5px;transform:scaleX(0.985);transform-origin:left center;">Tỉnh</div>
<div class="t rn" style="top:684px;font-size:13px;color:#333;right:816px;letter-spacing:0.02px;">3.354</div>
<div class="t rn" style="top:684px;font-size:13px;color:#333;right:716px;letter-spacing:0.02px;">1.275</div>
<div class="abs" style="left:663px;top:685px;width:74px;height:10px;border-radius:5px;background:#f2f2f3"></div>
<div class="abs" style="left:663px;top:685px;width:27px;height:10px;border-radius:5px;background:#35b06b"></div>
<div class="t rn" style="top:684px;font-size:13px;color:#333;right:596px;transform:scaleX(0.93);transform-origin:right center;">38%</div>
<div class="t rn" style="top:684px;font-size:13px;color:#333;right:496px;letter-spacing:0.02px;">22.062</div>
<div class="t rn" style="top:684px;font-size:13px;color:#333;right:396px;letter-spacing:0.02px;">9.709</div>
<div class="abs" style="left:983px;top:685px;width:74px;height:10px;border-radius:5px;background:#f2f2f3"></div>
<div class="abs" style="left:983px;top:685px;width:37px;height:10px;border-radius:5px;background:#4262ee"></div>
<div class="t rn" style="top:684px;font-size:13px;color:#333;right:276px;transform:scaleX(0.93);transform-origin:right center;">44%</div>
<div class="t rn" style="top:684px;font-size:13px;color:#333;left:1106.5px;letter-spacing:0.14px;">15:20:53 15/03/2024</div>
<div class="t rn" style="top:684px;font-size:13px;color:#333;left:1246.3px;transform:scaleX(0.95);transform-origin:left center;">VNPT</div>
<div class="t rn" style="left:60px;width:44px;text-align:center;top:716px;font-size:13px;color:#333;">8</div>
<div class="t rn" style="top:716px;font-size:13px;color:#333;left:112.5px;transform:scaleX(0.985);transform-origin:left center;">Tỉnh</div>
<div class="t rn" style="top:716px;font-size:13px;color:#333;right:816px;letter-spacing:0.02px;">2.596</div>
<div class="t rn" style="top:716px;font-size:13px;color:#333;right:716px;letter-spacing:0.02px;">1.114</div>
<div class="abs" style="left:663px;top:717px;width:74px;height:10px;border-radius:5px;background:#f2f2f3"></div>
<div class="abs" style="left:663px;top:717px;width:33px;height:10px;border-radius:5px;background:#35b06b"></div>
<div class="t rn" style="top:716px;font-size:13px;color:#333;right:596px;transform:scaleX(0.93);transform-origin:right center;">43%</div>
<div class="t rn" style="top:716px;font-size:13px;color:#333;right:496px;letter-spacing:0.02px;">19.788</div>
<div class="t rn" style="top:716px;font-size:13px;color:#333;right:396px;letter-spacing:0.02px;">9.282</div>
<div class="abs" style="left:983px;top:717px;width:74px;height:10px;border-radius:5px;background:#f2f2f3"></div>
<div class="abs" style="left:983px;top:717px;width:41px;height:10px;border-radius:5px;background:#4262ee"></div>
<div class="t rn" style="top:716px;font-size:13px;color:#333;right:276px;transform:scaleX(0.93);transform-origin:right center;">47%</div>
<div class="t rn" style="top:716px;font-size:13px;color:#333;left:1106.5px;letter-spacing:0.14px;">15:20:53 15/03/2024</div>
<div class="t rn" style="top:716px;font-size:13px;color:#333;left:1246.3px;transform:scaleX(0.95);transform-origin:left center;">TOANCAU</div>
<div class="t rn" style="left:60px;width:44px;text-align:center;top:748px;font-size:13px;color:#333;">9</div>
<div class="t rn" style="top:748px;font-size:13px;color:#333;left:112.5px;transform:scaleX(0.985);transform-origin:left center;">Tỉnh</div>
<div class="t rn" style="top:748px;font-size:13px;color:#333;right:816px;letter-spacing:0.02px;">3.397</div>
<div class="t rn" style="top:748px;font-size:13px;color:#333;right:716px;letter-spacing:0.02px;">2.863</div>
<div class="abs" style="left:663px;top:749px;width:74px;height:10px;border-radius:5px;background:#f2f2f3"></div>
<div class="abs" style="left:663px;top:749px;width:61px;height:10px;border-radius:5px;background:#35b06b"></div>
<div class="t rn" style="top:748px;font-size:13px;color:#333;right:596px;transform:scaleX(0.93);transform-origin:right center;">80%</div>
<div class="t rn" style="top:748px;font-size:13px;color:#333;right:496px;letter-spacing:0.02px;">28.896</div>
<div class="t rn" style="top:748px;font-size:13px;color:#333;right:396px;letter-spacing:0.02px;">22.657</div>
<div class="abs" style="left:983px;top:749px;width:74px;height:10px;border-radius:5px;background:#f2f2f3"></div>
<div class="abs" style="left:983px;top:749px;width:65px;height:10px;border-radius:5px;background:#4262ee"></div>
<div class="t rn" style="top:748px;font-size:13px;color:#333;right:276px;transform:scaleX(0.93);transform-origin:right center;">78%</div>
<div class="t rn" style="top:748px;font-size:13px;color:#333;left:1106.5px;letter-spacing:0.14px;">15:20:53 15/03/2024</div>
<div class="t rn" style="top:748px;font-size:13px;color:#333;left:1246.3px;transform:scaleX(0.95);transform-origin:left center;">MISA</div>
<svg class="abs" style="left:30px;top:426px" width="14" height="50" viewBox="30 426 14 50"><path d="M35 431.600l4.100 3.500-4.100 3.500Z" fill="#50546a" stroke="#50546a" stroke-width=".5" stroke-linejoin="round"/><path d="M33.900 465h6.400l-3.200 3.900Z" fill="#4d5166" stroke="#4d5166" stroke-width=".9" stroke-linejoin="round"/></svg>
<div class="abs" style="left:175.500px;top:489px;width:92px;height:142px;background:linear-gradient(90deg,#ededed 0,#eeeeee 40%,rgba(240,240,240,.75) 70%,rgba(244,244,244,0) 100%);filter:blur(1.2px)"></div>
<div class="abs" style="left:138.500px;top:645px;width:104px;height:119px;background:radial-gradient(ellipse 60px 70px at 100% 0,rgba(255,255,255,.7) 0,rgba(255,255,255,0) 100%),linear-gradient(90deg,#ececec 0,#eeeeee 70%,#f1f1f1 100%);filter:blur(1.2px)"></div>
<div class="t " id="ft1" style="top:782px;font-size:13px;color:#333;left:34px;">Tổng số:</div>
<div class="t " id="ft2" style="top:782px;font-size:13px;color:#1f1f1f;left:87px;-webkit-text-stroke:.55px currentColor;">150 bản ghi</div>
</div></div>
<!-- ===== TOOLTIP ===== -->
<svg class="abs" style="left:1300px;top:265px" width="236" height="110" viewBox="1300 265 236 110"><path d="M1322.500 273.800L1362 300.500L1345 311Z" fill="#1ba68c"/><rect x="1314.800" y="297.700" width="218.700" height="69.300" rx="34.600" fill="#1ba68c"/></svg>
<div class="abs" style="left:0;top:0;width:1536px;height:821px;will-change:transform;pointer-events:none">
<div class="t" id="tip1" style="left:1315px;width:218px;text-align:center;top:312.500px;font-size:18.670px;color:#fff">Thu gọn/mở rộng</div>
<div class="t" id="tip2" style="left:1315px;width:218px;text-align:center;top:334.500px;font-size:18.670px;color:#fff">biểu đồ tổng quan</div>
</div>
</body>
</html>
